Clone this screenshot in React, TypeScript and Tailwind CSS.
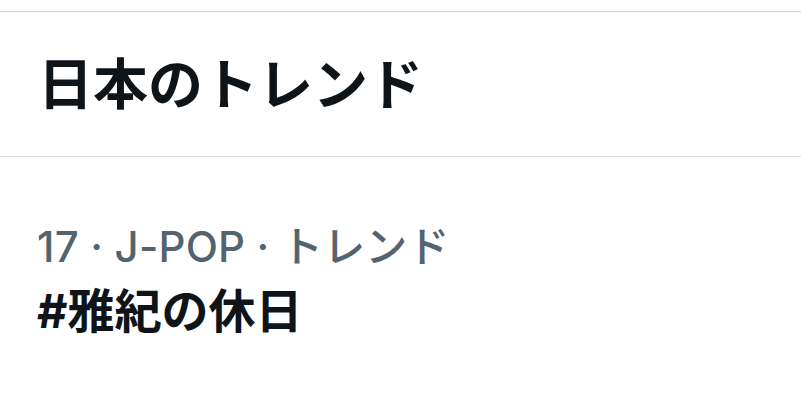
export default function App() {
  const font = { fontFamily: '"Inter", "Noto Sans CJK JP", "Noto Sans", sans-serif' };
  return (
    <div className="w-[801px] h-[407px] bg-white overflow-hidden flex flex-col" style={font}>
      <div className="h-[11px] bg-[#fcfcfc] border-b border-[#d6d6d6] box-content" />
      <div className="h-[145px] flex items-center pl-[38px] border-b border-[#dadada]">
        <h2 className="text-[55px] font-bold text-[#0f1419] leading-none">日本のトレンド</h2>
      </div>
      <div className="flex flex-col pl-[37px] pt-[65px]">
        <div className="text-[42px] font-medium text-[#536471] leading-[50px] tracking-[0.2px]">17 · J-POP · トレンド</div>
        <div className="text-[47px] font-bold text-[#0f1419] leading-[60px] mt-[9px]">#雅紀の休日</div>
      </div>
    </div>
  );
}
